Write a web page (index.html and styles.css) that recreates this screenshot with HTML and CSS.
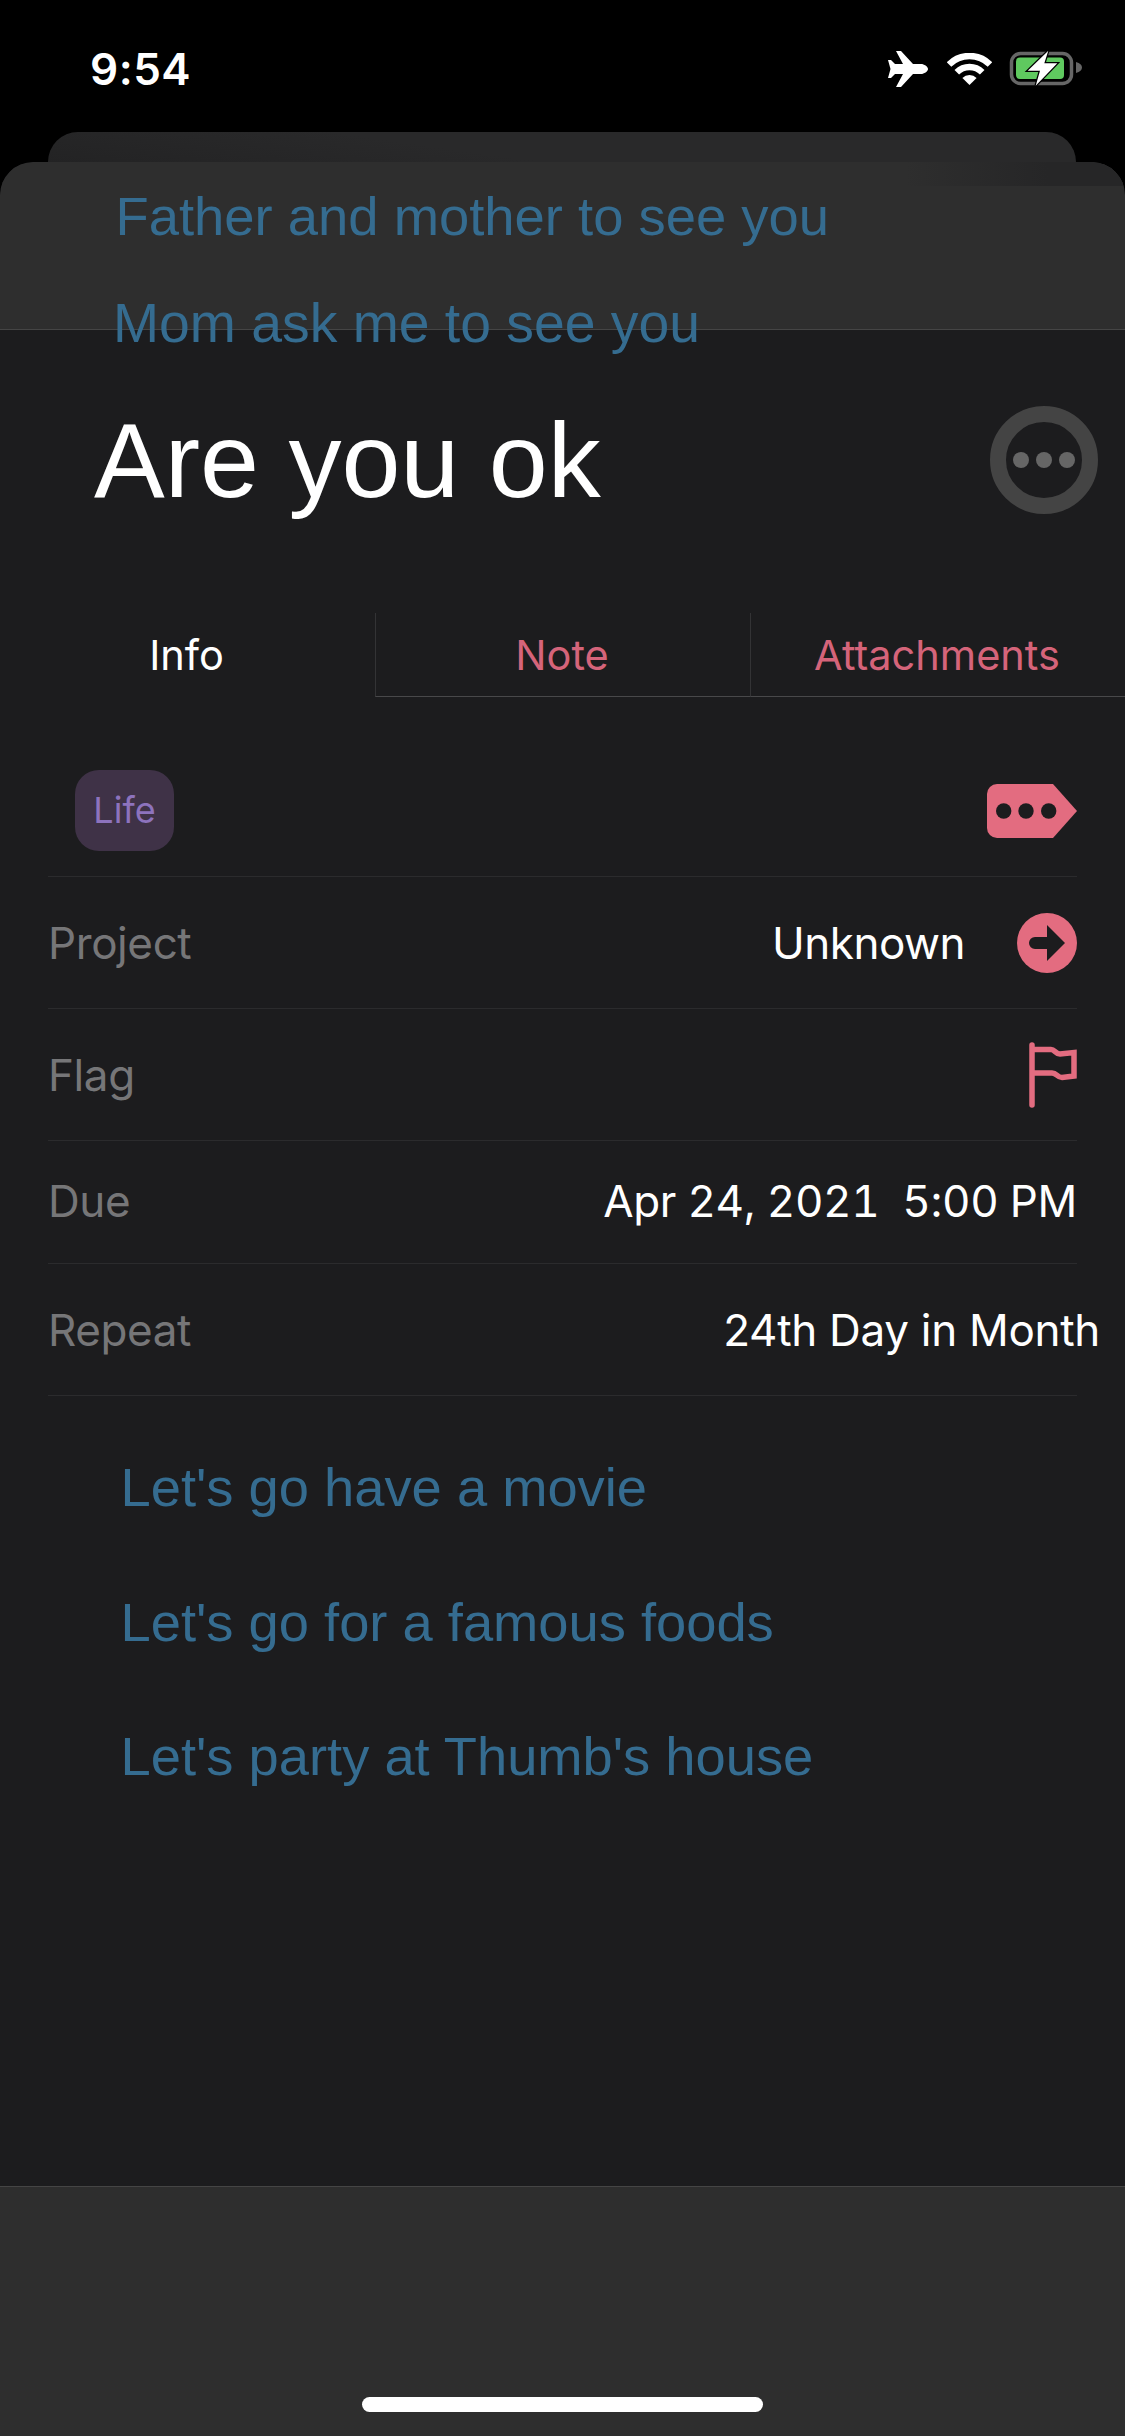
FILE: index.html
```html
<!DOCTYPE html>
<html>

<head>
    <meta charset="UTF-8">
    <title>Are you ok</title>
    <link rel="stylesheet" href="styles.css">
</head>

<body>
    <header class="status-bar">
        <span class="clock">9:54</span>
        <div class="status-icons">
            <svg class="icon-plane" viewBox="0 0 40 36">
                <path fill="#fff" d="M40 18C40 15.5 36 13 33 13L25 13L13 0L8 0L15 13L7 13L3 9L0 9L2.5 18L0 27L3 27L7 23L15 23L8 36L13 36L25 23L33 23C36 23 40 20.5 40 18Z" />
            </svg>
            <svg class="icon-wifi" viewBox="0 0 45 33">
                <path fill="none" stroke="#fff" stroke-width="6.5" d="M2 11.5A29 29 0 0 1 43 11.5M9.8 19.3A18 18 0 0 1 35.2 19.3" />
                <path fill="#fff" d="M22.5 32L15.4 24.9A10 10 0 0 1 29.6 24.9Z" />
            </svg>
            <svg class="icon-battery" viewBox="0 0 72 36">
                <rect x="1.5" y="2.5" width="60" height="30" rx="9" fill="none" stroke="#666" stroke-width="3.5" />
                <rect x="6" y="6.5" width="48" height="21.5" rx="4" fill="#5fc95f" />
                <path fill="#666" d="M66 11C70 12 72 14 72 16.5C72 19 70 21 66 22Z" />
                <path fill="#fff" stroke="#000" stroke-width="2.5" paint-order="stroke" d="M38.3 -.3L17.7 19.7L30 19.7L25.7 34.7L47.3 12.3L34.3 12.3Z" />
            </svg>
        </div>
    </header>

    <div class="back-card"></div>

    <main class="sheet">
        <section class="sheet-top">
            <p class="top-link">Father and mother to see you</p>
            <p class="top-link second">Mom ask me to see you</p>
        </section>

        <section class="title-row">
            <h1>Are you ok</h1>
            <button class="more-btn"><i></i><i></i><i></i></button>
        </section>

        <nav class="tabs">
            <button class="tab active">Info</button>
            <button class="tab">Note</button>
            <button class="tab">Attachments</button>
        </nav>

        <section class="rows">
            <div class="row row-tags">
                <span class="chip">Life</span>
                <svg class="icon-tag" viewBox="0 0 90 54">
                    <path fill="#e36c80" d="M10 0H66L90 27L66 54H10A10 10 0 0 1 0 44V10A10 10 0 0 1 10 0Z" />
                    <circle cx="16.7" cy="27" r="7.7" fill="#1c1c1e" />
                    <circle cx="39" cy="27" r="7.7" fill="#1c1c1e" />
                    <circle cx="61.7" cy="27" r="7.7" fill="#1c1c1e" />
                </svg>
            </div>
            <div class="row row-project">
                <span class="label">Project</span>
                <span class="value project-value">Unknown</span>
                <svg class="icon-arrow" viewBox="0 0 60 60">
                    <circle cx="30" cy="30" r="30" fill="#e36c80" />
                    <path fill="#1c1c1e" d="M18 24H30V12L48 30L30 48V36H18A6 6 0 0 1 18 24Z" />
                </svg>
            </div>
            <div class="row row-flag">
                <span class="label">Flag</span>
                <svg class="icon-flag" viewBox="0 0 48 66">
                    <path fill="none" stroke="#e36c80" stroke-width="5.5" stroke-linecap="round" d="M3 3V63" />
                    <path fill="none" stroke="#e36c80" stroke-width="5.5" d="M3 7.5H22C26 7.5 26 12 31 12L45 10.5V34L33 35.5C28 35.5 28 31 23 31H3" />
                </svg>
            </div>
            <div class="row row-due">
                <span class="label">Due</span>
                <span class="value due-value">Apr 24, 2021  5:00 PM</span>
            </div>
            <div class="row row-repeat">
                <span class="label">Repeat</span>
                <span class="value overflowing">24th Day in Month</span>
            </div>
        </section>

        <section class="links">
            <p>Let's go have a movie</p>
            <p>Let's go for a famous foods</p>
            <p>Let's party at Thumb's house</p>
        </section>

        <footer class="bottom-bar">
            <div class="home-bar"></div>
        </footer>
    </main>
</body>

</html>
```

FILE: styles.css
```css
* {
    box-sizing: border-box;
}

body {
    margin: 0;
    width: 1125px;
    height: 2436px;
    overflow: hidden;
    display: flex;
    flex-direction: column;
    background-color: #000;
    color: #fff;
    font-family: Inter, "Liberation Sans", sans-serif;
}

p,
h1 {
    margin: 0;
}

button {
    border: 0;
    padding: 0;
    background: none;
    font: inherit;
}

/* status bar */
.status-bar {
    height: 132px;
    flex: none;
    display: flex;
    justify-content: space-between;
    align-items: flex-start;
    padding: 38px 43px 0 90px;
}

.clock {
    font-size: 44px;
    font-weight: 600;
    line-height: 62px;
    letter-spacing: .5px;
}

.status-icons {
    height: 62px;
    width: 194px;
    display: flex;
    align-items: center;
}

.icon-plane {
    width: 40px;
    height: 36px;
}

.icon-wifi {
    width: 45px;
    height: 33px;
    margin-left: 19px;
}

.icon-battery {
    width: 72px;
    height: 36px;
    margin-left: 18px;
    overflow: visible;
}

/* stacked cards */
.back-card {
    height: 30px;
    flex: none;
    margin: 0 49px 0 48px;
    border-radius: 33px 33px 0 0;
    background: linear-gradient(188deg, #29292a 60%, #232324 100%);
}

.sheet {
    flex: 1;
    display: flex;
    flex-direction: column;
    border-radius: 33px 33px 0 0;
    background-color: #1c1c1e;
    overflow: hidden;
}

.sheet-top {
    height: 168px;
    flex: none;
    padding-top: 1px;
    border-bottom: 1px solid #454545;
    border-radius: 33px 33px 0 0;
    background:
        linear-gradient(to right, transparent, #262627 65%) right top / 220px 24px no-repeat,
        #2e2e2e;
}

.top-link {
    font-family: "Liberation Sans", Arial, sans-serif;
    font-size: 54.4px;
    line-height: 107px;
    color: #356c90;
    padding-left: 115.5px;
}

.top-link.second {
    font-size: 55.3px;
    padding-left: 113px;
}

/* title */
.title-row {
    flex: none;
    display: flex;
    justify-content: space-between;
    align-items: center;
    padding: 70px 27px 0 94px;
}

h1 {
    font-family: "Liberation Sans", Arial, sans-serif;
    font-size: 106px;
    font-weight: 400;
    line-height: 120px;
}

.more-btn {
    width: 108px;
    height: 108px;
    display: flex;
    justify-content: center;
    align-items: center;
    gap: 7px;
    border: 16px solid #444;
    border-radius: 50%;
}

.more-btn i {
    width: 16px;
    height: 16px;
    border-radius: 50%;
    background-color: #666;
}

/* tabs */
.tabs {
    flex: none;
    display: grid;
    grid-template-columns: repeat(3, 375px);
    margin-top: 93px;
}

.tab {
    height: 84px;
    padding-right: 2px;
    font-size: 41.5px;
    color: #d5647a;
    border-left: 1px solid #333335;
    border-bottom: 1px solid #48484a;
}

.tab.active {
    color: #fff;
    border: 0;
}

/* info rows */
.row {
    display: flex;
    align-items: center;
    margin: 0 48px 0 48px;
    border-bottom: 1px solid #2b2b2d;
    font-size: 44px;
}

.row-tags {
    height: 180px;
    justify-content: space-between;
    align-items: flex-start;
    padding: 73px 0 0 27px;
}

.row-project,
.row-flag {
    height: 132px;
}

.row-due {
    height: 123px;
    padding-bottom: 2px;
}

.row-repeat {
    height: 132px;
}

.chip {
    width: 99px;
    height: 81px;
    display: flex;
    justify-content: center;
    align-items: center;
    padding-bottom: 2px;
    border-radius: 24px;
    background-color: #3f3247;
    color: #8d73bd;
    font-size: 36px;
}

.icon-tag {
    width: 90px;
    height: 54px;
    margin-top: 14px;
}

.label {
    color: #767678;
    margin-right: auto;
    letter-spacing: -.4px;
}

.value {
    white-space: pre;
    letter-spacing: -.3px;
}

.due-value {
    font-variant-numeric: tabular-nums;
    letter-spacing: -.35px;
}

.project-value {
    margin-right: 52px;
    letter-spacing: -.5px;
}

.overflowing {
    margin-right: -23px;
}

.icon-arrow {
    width: 60px;
    height: 60px;
}

.icon-flag {
    width: 48px;
    height: 66px;
}

/* links */
.links {
    flex: none;
    padding: 25px 0 0 120.5px;
    font-family: "Liberation Sans", Arial, sans-serif;
    font-size: 54.3px;
    line-height: 134.5px;
    color: #356c90;
}

/* bottom */
.bottom-bar {
    margin-top: auto;
    height: 250px;
    flex: none;
    padding-top: 210px;
    border-top: 1px solid #454545;
    background-color: #2e2e2e;
}

.home-bar {
    width: 401px;
    height: 15px;
    margin: 0 auto;
    border-radius: 8px;
    background-color: #fff;
}
```
